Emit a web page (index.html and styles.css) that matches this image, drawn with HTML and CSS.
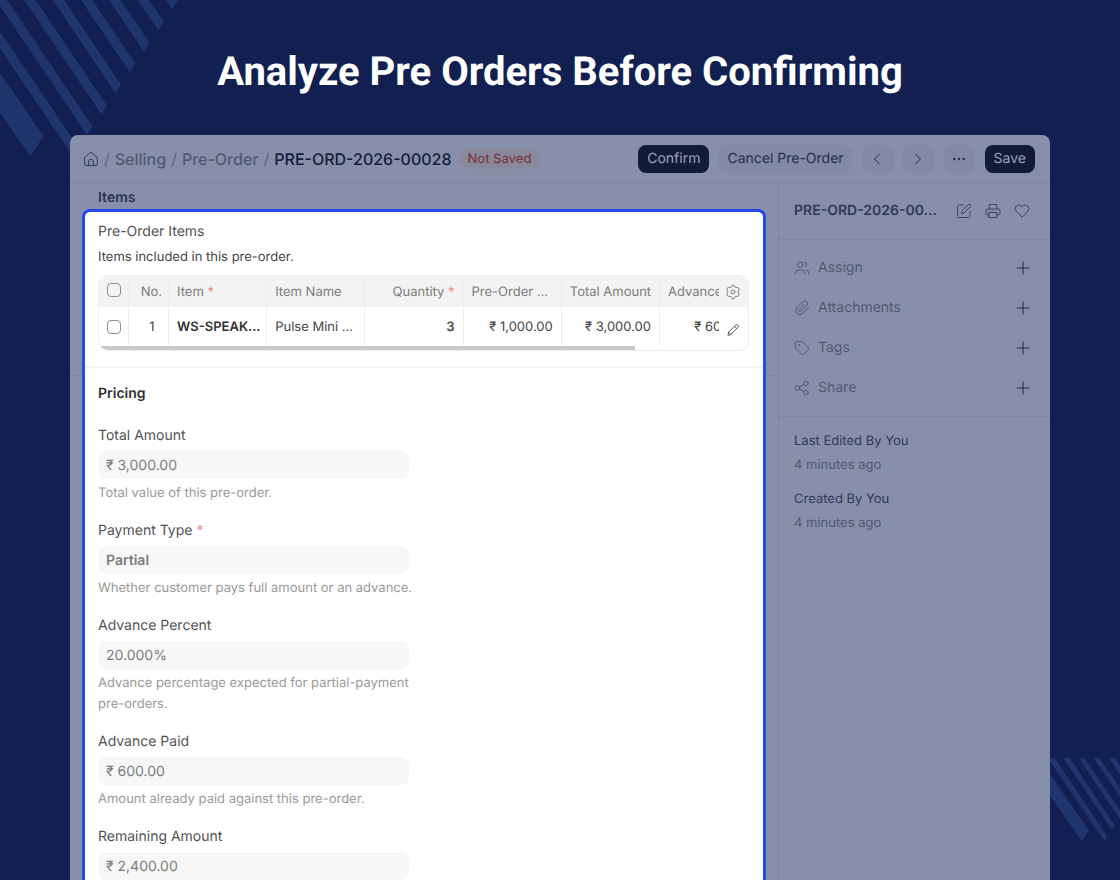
FILE: index.html
```html
<!DOCTYPE html>
<html lang="en">
<head>
<meta charset="utf-8">
<title>Analyze Pre Orders Before Confirming</title>
<link rel="stylesheet" href="styles.css">
</head>
<body>
<div class="page">
  <svg class="stripes stripes-top" viewBox="0 0 540 480" aria-hidden="true">
    <path d="M0 219L131 409L91 468L0 338ZM0 94L235 442L218 468L0 145ZM-12 0H21L277 379L261 405ZM73 0H107L321 317L304 343ZM158 0H192L363 254L347 280ZM243 0H277L405 190L389 217ZM328 0H362L448 127L431 154ZM413 0H447L491 64L475 91ZM498 0H534L517 27Z"/>
  </svg>
  <svg class="stripes stripes-bottom" viewBox="0 0 210 252" aria-hidden="true">
    <path d="M0 48L117 218L95 250L0 112ZM-6 0H14L172 236L163 250ZM40 0H59L195 203L186 216ZM86 0H104L218 169L209 183ZM131 0H149L241 136L232 150ZM177 0H195L264 102L255 116Z"/>
  </svg>

  <h1 class="headline">Analyze Pre Orders Before Confirming</h1>

  <div class="window">
    <header class="topbar">
      <nav class="crumbs" aria-label="Breadcrumb">
        <a href="#" class="home" aria-label="Home"><svg class="icon" viewBox="0 0 16 16"><path d="M1.700 6.400L7 1.900a1.500 1.500 0 0 1 2 0l5.300 4.500v7a1.200 1.200 0 0 1-1.200 1.200H2.900a1.200 1.200 0 0 1-1.200-1.200zM5.700 14.600V9.500a.8.8 0 0 1 .8-.8h3a.8.8 0 0 1 .8.8v5.100"/></svg></a>
        <span class="sep">/</span><a href="#">Selling</a>
        <span class="sep">/</span><a href="#">Pre-Order</a>
        <span class="sep">/</span><strong class="current">PRE-ORD-2026-00028</strong>
      </nav>
      <span class="badge">Not Saved</span>
      <div class="actions">
        <button class="btn dark">Confirm</button>
        <button class="btn">Cancel Pre-Order</button>
        <button class="btn square" aria-label="Previous"><svg class="icon" viewBox="0 0 16 16"><path d="M10.500 3L5.500 8l5 5"/></svg></button>
        <button class="btn square" aria-label="Next"><svg class="icon" viewBox="0 0 16 16"><path d="M5.500 3l5 5-5 5"/></svg></button>
        <button class="btn square" aria-label="More"><svg class="icon dots" viewBox="0 0 16 16"><circle cx="3.300" cy="8" r="1.200"/><circle cx="8" cy="8" r="1.200"/><circle cx="12.700" cy="8" r="1.200"/></svg></button>
        <button class="btn dark">Save</button>
      </div>
    </header>

    <div class="columns">
      <main class="main">
        <h2 class="tab-title">Items</h2>
        <section class="spotlight">
          <div class="items">
            <h3 class="label">Pre-Order Items</h3>
            <p class="intro">Items included in this pre-order.</p>
            <div class="grid">
              <table>
                <colgroup><col class="c-check"><col class="c-no"><col><col><col><col><col><col class="c-cut"><col class="c-tool"></colgroup>
                <thead>
                  <tr>
                    <th><input type="checkbox" aria-label="Select all rows"></th>
                    <th class="num">No.</th>
                    <th>Item <span class="req">*</span></th>
                    <th>Item Name</th>
                    <th class="num">Quantity <span class="req">*</span></th>
                    <th>Pre-Order ...</th>
                    <th class="num">Total Amount</th>
                    <th class="cut"><div>Advance</div></th>
                    <th class="tool"><button aria-label="Configure columns"><svg class="icon" viewBox="0 0 24 24"><path d="M9.700 4.100l.9-2.100h2.800l.9 2.100 2.100 1.200 2.300-.3 1.700.9.900 2.600-1.400 1.900v2.800l1.400 1.900-.9 2.600-1.700.9-2.300-.3-2.100 1.200-.9 2.500h-2.800l-.9-2.500-2.100-1.200-2.300.3-1.700-.9-.9-2.600 1.400-1.900v-2.800L2.700 8.500l.9-2.600 1.700-.9 2.300.3z"/><circle cx="12" cy="11.900" r="3"/></svg></button></th>
                  </tr>
                </thead>
                <tbody>
                  <tr>
                    <td><input type="checkbox" aria-label="Select row 1"></td>
                    <td class="mid">1</td>
                    <td class="bold">WS-SPEAK...</td>
                    <td>Pulse Mini ...</td>
                    <td class="num semi">3</td>
                    <td class="num">₹ 1,000.00</td>
                    <td class="num">₹ 3,000.00</td>
                    <td class="cut"><div class="num">₹ 600.00</div></td>
                    <td class="tool edit"><button aria-label="Edit row"><svg class="icon" viewBox="0 0 16 16"><path d="M2.300 13.700l.8-3.400 8.200-8.200a1.300 1.300 0 0 1 1.800 0l.8.8a1.300 1.300 0 0 1 0 1.800l-8.200 8.200zM9.600 3.800l2.600 2.600M3.100 10.300l2.600 2.600"/></svg></button></td>
                  </tr>
                </tbody>
              </table>
              <div class="scroll"></div>
            </div>
          </div>

          <form class="pricing">
            <h3 class="section-title">Pricing</h3>
            <div class="fields">
              <div class="field"><label for="total">Total Amount</label><input id="total" value="₹ 3,000.00" readonly><p>Total value of this pre-order.</p></div>
              <div class="field"><label for="type">Payment Type <span class="req">*</span></label><input id="type" class="semi" value="Partial" readonly><p>Whether customer pays full amount or an advance.</p></div>
              <div class="field"><label for="percent">Advance Percent</label><input id="percent" value="20.000%" readonly><p>Advance percentage expected for partial-payment pre-orders.</p></div>
              <div class="field"><label for="paid">Advance Paid</label><input id="paid" value="₹ 600.00" readonly><p>Amount already paid against this pre-order.</p></div>
              <div class="field"><label for="remaining">Remaining Amount</label><input id="remaining" value="₹ 2,400.00" readonly></div>
            </div>
          </form>
        </section>
      </main>

      <aside class="sidebar">
        <div class="side-head">
          <h2>PRE-ORD-2026-00...</h2>
          <button aria-label="Rename"><svg class="icon" viewBox="0 0 16 16"><path d="M7.500 2H2.700A1.200 1.200 0 0 0 1.500 3.200v10.100a1.200 1.200 0 0 0 1.200 1.200h10.100a1.200 1.200 0 0 0 1.200-1.200V8.500M5.700 10.300l.5-2.500 6.200-6.200a1.100 1.100 0 0 1 1.600 0l.4.4a1.100 1.100 0 0 1 0 1.600L8.200 9.800z"/></svg></button>
          <button aria-label="Print"><svg class="icon" viewBox="0 0 16 16"><path d="M4.200 6V1.500h7.600V6M4 11.800H2.200A1.200 1.200 0 0 1 1 10.600V7.200A1.200 1.200 0 0 1 2.200 6h11.600A1.200 1.200 0 0 1 15 7.200v3.400a1.200 1.200 0 0 1-1.200 1.200H12M4 9.500h8v5H4z"/></svg></button>
          <button aria-label="Like"><svg class="icon" viewBox="0 0 16 16"><path d="M8 14L2.200 8.200a3.700 3.700 0 0 1 0-5.200 3.600 3.600 0 0 1 5.100 0l.7.800.7-.8a3.600 3.600 0 0 1 5.100 0 3.700 3.700 0 0 1 0 5.200z"/></svg></button>
        </div>
        <ul class="links">
          <li><svg class="icon" viewBox="0 0 24 24"><path d="M16 21v-2a4 4 0 0 0-4-4H6a4 4 0 0 0-4 4v2M22 21v-2a4 4 0 0 0-3-3.870M16 3.130a4 4 0 0 1 0 7.750"/><circle cx="9.500" cy="7" r="4"/></svg><span>Assign</span><button aria-label="Add assignee"><svg class="icon" viewBox="0 0 16 16"><path d="M8 2v12M2 8h12"/></svg></button></li>
          <li><svg class="icon" viewBox="0 0 24 24"><path d="M22 11l-9.200 9.200a6 6 0 0 1-8.500-8.500l9.200-9.200a4 4 0 0 1 5.700 5.700l-9.200 9.200a2 2 0 0 1-2.800-2.800l8.500-8.500"/></svg><span>Attachments</span><button aria-label="Add attachment"><svg class="icon" viewBox="0 0 16 16"><path d="M8 2v12M2 8h12"/></svg></button></li>
          <li><svg class="icon" viewBox="0 0 24 24"><path d="M12.600 2.600A2 2 0 0 0 11.200 2H3.500A1.500 1.500 0 0 0 2 3.500v7.700a2 2 0 0 0 .6 1.400l8.700 8.700a2.400 2.400 0 0 0 3.400 0l6.600-6.600a2.400 2.400 0 0 0 0-3.400z"/><circle cx="7.500" cy="7.500" r=".7"/></svg><span>Tags</span><button aria-label="Add tag"><svg class="icon" viewBox="0 0 16 16"><path d="M8 2v12M2 8h12"/></svg></button></li>
          <li><svg class="icon" viewBox="0 0 24 24"><circle cx="18" cy="5" r="3.500"/><circle cx="5" cy="12" r="3.500"/><circle cx="18" cy="19" r="3.500"/><path d="M8.100 10.300l6.800-3.600M8.100 13.700l6.800 3.600"/></svg><span>Share</span><button aria-label="Add share"><svg class="icon" viewBox="0 0 16 16"><path d="M8 2v12M2 8h12"/></svg></button></li>
        </ul>
        <dl class="history">
          <div><dt>Last Edited By You</dt><dd>4 minutes ago</dd></div>
          <div><dt>Created By You</dt><dd>4 minutes ago</dd></div>
        </dl>
      </aside>
    </div>
  </div>
</div>
</body>
</html>
```

FILE: styles.css
```css
* { box-sizing: border-box; }
body { margin: 0; font: 14px/20px Inter, sans-serif; color: #525252; text-rendering: geometricPrecision; }
h1, h2, h3, p, ul, dl, dd { margin: 0; padding: 0; }
button, input { font: inherit; color: inherit; text-rendering: inherit; }
button { border: 0; background: none; padding: 0; cursor: pointer; }
a { color: inherit; text-decoration: none; }

.page { position: relative; display: flex; flex-direction: column; height: 100vh; overflow: hidden; background: #112050; }
.stripes { position: absolute; fill: #20356d; }
.stripes-top { top: 0; left: 0; width: 180px; }
.stripes-bottom { right: 0; bottom: 38px; width: 70px; }
.headline { padding: 48px 16px 39px; text-align: center; font: 700 40px/48px Roboto, sans-serif; color: #fff; }

.icon { display: block; width: 16px; height: 16px; fill: none; stroke: currentColor; stroke-linejoin: round; stroke-linecap: round; flex: none; }
.icon[viewBox="0 0 24 24"] { stroke-width: 1.5; }
.icon.dots { fill: currentColor; stroke: none; }

.window { position: relative; flex: 1; display: flex; flex-direction: column; margin: 0 70px; background: #8890a9; border-radius: 8px 8px 0 0; color: #3c4461; }
.topbar { display: flex; align-items: center; height: 48px; padding: 0 15px 0 13px; border-bottom: 1px solid #7d86a0; }
.crumbs { display: flex; align-items: center; gap: 5px; font-size: 16px; font-weight: 500; color: #505871; }
.home { color: #30385a; }
.sep { font-weight: 400; color: #5c647e; }
.current { font-weight: 500; color: #151d3b; }
.badge { margin-left: 8px; padding: 0 8px; border-radius: 10px; background: #89889d; font-size: 13px; font-weight: 500; color: #783a46; }
.actions { display: flex; gap: 10px; margin-left: auto; }
.btn { height: 28px; padding: 0 8px; border-radius: 8px; background: #828aa4; color: #252d4b; }
.btn.dark { padding: 0 9px; background: #121b38; color: #9fa5b8; }
.btn.square { display: grid; place-items: center; width: 31px; padding: 0; }

.columns { flex: 1; display: grid; grid-template-columns: minmax(0, 1fr) 272px; min-height: 0; }
.main { min-height: 0; padding: 5px 12px 0; background: linear-gradient(#7d86a0, #7d86a0) 0 192px / 100% 1px no-repeat; }
.tab-title { padding-left: 16px; font-size: 14px; font-weight: 600; color: #2b3352; }
.spotlight { margin-top: 1px; padding-bottom: 24px; border: 3px solid #2349ef; border-bottom: 0; border-radius: 8px 8px 0 0; background: #fff; color: #525252; }
.items { padding: 10px 14px 15px 13px; border-bottom: 2px solid #f5f5f5; }
.label { font-size: 14px; font-weight: 400; }
.intro { margin: 5px 0 8px; font-size: 13px; color: #454545; }
.req { color: #ef8a86; }

.grid { overflow: hidden; border: 1px solid #ededed; border-radius: 10px; }
table { width: 100%; table-layout: fixed; border-collapse: separate; border-spacing: 0; }
.c-check { width: 29px; }
.c-no { width: 40px; }
.c-cut { width: 60px; }
.c-tool { width: 29px; }
th, td { padding: 0 8px; overflow: hidden; white-space: nowrap; text-align: left; font-size: 13px; font-weight: 400; border-left: 1px solid #ededed; }
th { height: 31px; background: #f3f3f3; color: #7c7c7c; }
td { height: 39px; color: #454545; }
th:first-child, td:first-child { border-left: 0; }
th:first-child { padding-bottom: 3px; }
.num { text-align: right; }
th.num:nth-child(2) { padding-right: 6px; }
td.mid { padding-left: 15px; text-align: center; }
.semi { font-weight: 600; }
.bold { font-weight: 600; color: #303030; }
th.cut, td.cut { padding-right: 0; }
.cut div { width: 81px; }
th.tool, td.tool { padding: 0; border-left: 0; }
.tool button { display: grid; place-items: center; width: 28px; height: 28px; }
td.edit { padding-top: 6px; }
.edit .icon { width: 14px; height: 14px; }
input[type="checkbox"] { appearance: none; display: block; width: 14px; height: 14px; margin: 0; border: 1px solid #8f8f8f; border-radius: 4px; background: #fff; }
th input[type="checkbox"] { background: transparent; }
.scroll { width: 536px; max-width: 100%; height: 4px; background: #c7c7c7; }

.pricing { padding: 16px 13px 0; }
.section-title { font-size: 14px; font-weight: 600; color: #303030; }
.fields { display: grid; gap: 17px; width: calc(50% - 15px); padding-top: 22px; }
.field label { display: block; margin-bottom: 5px; }
.field input { display: block; width: 100%; height: 28px; padding: 0 8px; border: 0; border-radius: 8px; background: #f7f7f7; color: #7c7c7c; outline: 0; }
.field p { margin: 4px -8px 0 0; font-size: 13px; line-height: 21px; color: #999; }

.sidebar { border-left: 1px solid #7d86a0; }
.side-head { display: flex; align-items: center; gap: 13px; height: 57px; padding: 0 20px 0 15px; border-bottom: 1px solid #7d86a0; }
.side-head h2 { flex: 1; font-size: 14px; font-weight: 600; color: #30385a; white-space: nowrap; }
.links { display: grid; gap: 20px; padding: 18px 19px 18px 15px; list-style: none; border-bottom: 1px solid #7d86a0; }
.links li { display: flex; align-items: center; gap: 8px; color: #505871; }
.links span { flex: 1; }
.links button { color: #1e2644; }
.history { display: grid; gap: 14px; padding: 14px 15px; font-size: 13px; }
.history dt { color: #30385a; }
.history dd { margin-top: 4px; color: #505871; }
```
